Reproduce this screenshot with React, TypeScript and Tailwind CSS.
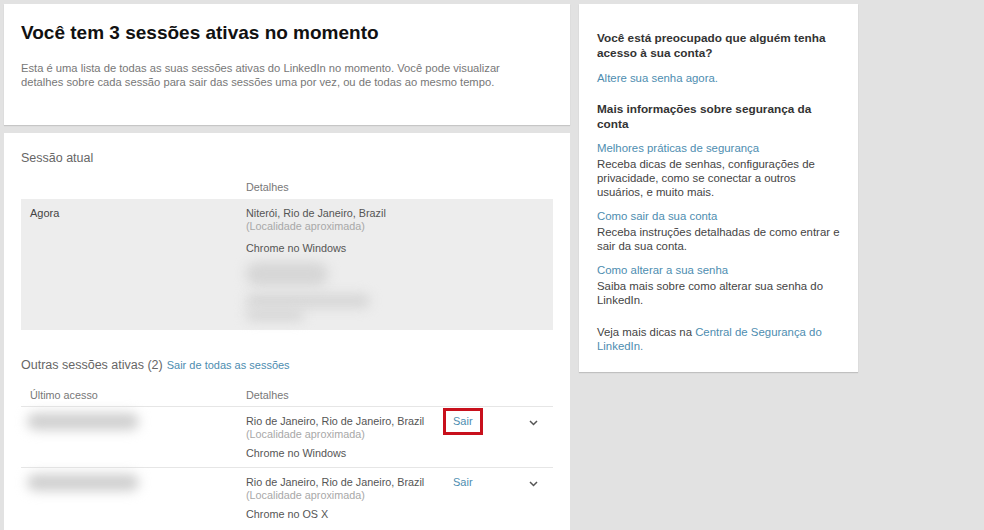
const link = "text-[#4d8db0]";

function Blur({ className }: { className: string }) {
  return <div className={`rounded-full blur-[6px] ${className}`} />;
}

function Chevron() {
  return (
    <svg width="9" height="6" viewBox="0 0 9 6" className="mt-[5px]">
      <path d="M1 1l3.5 3.5L8 1" fill="none" stroke="#555" strokeWidth="1.5" />
    </svg>
  );
}

interface SessionRowProps {
  place: string;
  browser: string;
  highlight?: boolean;
  last?: boolean;
}

function SessionRow({ place, browser, highlight, last }: SessionRowProps) {
  return (
    <div className={`flex items-start pl-[9px] pr-[15px] pt-[1px] pb-[7px] ${last ? "" : "border-b border-[#e6e6e6]"}`}>
      <div className="w-[216px] pt-[5px]">
        <Blur className="w-[112px] h-[17px] -ml-[3px] bg-[#cfcfcf]" />
      </div>
      <div className="w-[197px] pt-[7px] text-[10.8px] leading-[13px]">
        <div className="text-[#555]">{place}</div>
        <div className="text-[#a8a8a8]">(Localidade aproximada)</div>
        <div className="mt-[6px] text-[#555]">{browser}</div>
      </div>
      <div
        className={`border-[3px] px-[7px] py-[4px] text-[11px] leading-[13px] ${link} ${
          highlight ? "border-[#c8101c]" : "border-transparent"
        }`}
      >
        Sair
      </div>
      <div className="ml-auto pt-[7px]">
        <Chevron />
      </div>
    </div>
  );
}

export default function App() {
  return (
    <div className="h-screen w-full bg-[#e2e2e2] p-[4px] pb-0 flex items-start gap-[9px] font-['Liberation_Sans',Arial,sans-serif] overflow-hidden">
      <div className="w-[566px] flex flex-col gap-[8px]">
        <div className="h-[121px] bg-white px-[17px] pt-[17px] shadow-[0_1px_1px_rgba(0,0,0,0.12)]">
          <h1 className="text-[19px] leading-[24px] font-bold text-[#111]">
            Você tem 3 sessões ativas no momento
          </h1>
          <p className="mt-[16px] text-[11.2px] leading-[14px] text-[#777]">
            Esta é uma lista de todas as suas sessões ativas do LinkedIn no momento. Você pode visualizar
            <br />
            detalhes sobre cada sessão para sair das sessões uma por vez, ou de todas ao mesmo tempo.
          </p>
        </div>

        <div className="h-[397px] bg-white px-[17px] pt-[17px]">
          <div className="text-[12.5px] leading-[16px] text-[#666]">Sessão atual</div>
          <div className="mt-[15px] mb-[5px] pl-[225px] text-[10.8px] leading-[13px] text-[#777]">Detalhes</div>

          <div className="h-[131px] bg-[#ededed] flex items-start pl-[9px] pt-[8px]">
            <div className="w-[216px] text-[11px] leading-[13px] text-[#444]">Agora</div>
            <div className="text-[10.8px] leading-[13px]">
              <div className="text-[#555]">Niterói, Rio de Janeiro, Brazil</div>
              <div className="text-[#a8a8a8]">(Localidade aproximada)</div>
              <div className="mt-[9px] text-[#555]">Chrome no Windows</div>
              <Blur className="mt-[7px] w-[82px] h-[24px] bg-[#d6d6d6]" />
              <div className="mt-[8px] flex flex-col gap-[1px]">
                <Blur className="w-[124px] h-[14px] bg-[#d6d6d6]" />
                <Blur className="w-[58px] h-[12px] bg-[#d6d6d6]" />
              </div>
            </div>
          </div>

          <div className="mt-[27px] flex items-baseline gap-[4px]">
            <span className="text-[12.5px] leading-[16px] text-[#666]">Outras sessões ativas (2)</span>
            <span className={`text-[11px] ${link}`}>Sair de todas as sessões</span>
          </div>

          <div className="mt-[15px] flex pl-[9px] pb-[4px] border-b border-[#e6e6e6] text-[10.8px] leading-[13px] text-[#777]">
            <div className="w-[216px]">Último acesso</div>
            <div>Detalhes</div>
          </div>

          <SessionRow place="Rio de Janeiro, Rio de Janeiro, Brazil" browser="Chrome no Windows" highlight />
          <SessionRow place="Rio de Janeiro, Rio de Janeiro, Brazil" browser="Chrome no OS X" last />
        </div>
      </div>

      <div className="w-[279px] h-[368px] bg-white px-[18px] pt-[27px] shadow-[0_1px_1px_rgba(0,0,0,0.15)] text-[11.4px] leading-[14px] text-[#444]">
        <h2 className="text-[11.8px] leading-[15px] font-bold text-[#333]">
          Você está preocupado que alguém tenha
          <br />
          acesso à sua conta?
        </h2>
        <div className={`mt-[10px] ${link}`}>Altere sua senha agora.</div>

        <h2 className="mt-[17px] text-[11.8px] leading-[15px] font-bold text-[#333]">
          Mais informações sobre segurança da
          <br />
          conta
        </h2>

        <div className={`mt-[9px] ${link}`}>Melhores práticas de segurança</div>
        <div className="mt-[2px]">
          Receba dicas de senhas, configurações de
          <br />
          privacidade, como se conectar a outros
          <br />
          usuários, e muito mais.
        </div>

        <div className={`mt-[10px] ${link}`}>Como sair da sua conta</div>
        <div className="mt-[2px]">
          Receba instruções detalhadas de como entrar e
          <br />
          sair da sua conta.
        </div>

        <div className={`mt-[10px] ${link}`}>Como alterar a sua senha</div>
        <div className="mt-[2px]">
          Saiba mais sobre como alterar sua senha do
          <br />
          LinkedIn.
        </div>

        <div className="mt-[18px]">
          Veja mais dicas na <span className={link}>Central de Segurança do</span>
          <br />
          <span className={link}>LinkedIn.</span>
        </div>
      </div>
    </div>
  );
}
